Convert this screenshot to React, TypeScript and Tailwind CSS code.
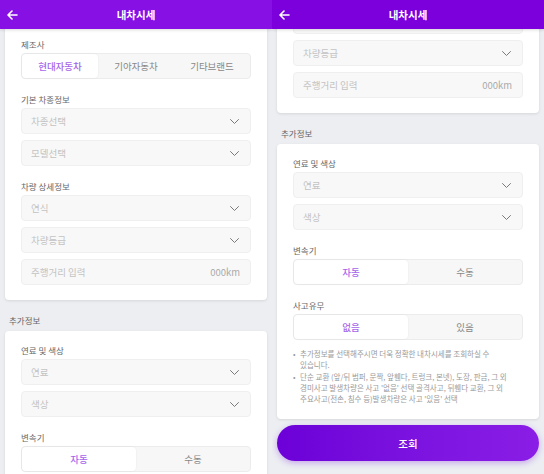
import type { ReactNode } from 'react';

const FONT = { fontFamily: '"Noto Sans CJK KR", "Noto Sans", sans-serif' };

function Chevron() {
  return (
    <svg width="9" height="5" viewBox="0 0 9 5" fill="none" className="shrink-0">
      <path d="M0.5 0.5L4.5 4.5L8.5 0.5" stroke="#7a7a7a" strokeWidth="1" strokeLinecap="round" strokeLinejoin="round" />
    </svg>
  );
}

function BackArrow() {
  return (
    <svg width="11" height="10" viewBox="0 0 11 10" fill="none">
      <path d="M10 5H1.2M5 1L1 5L5 9" stroke="white" strokeWidth="1.6" strokeLinecap="round" strokeLinejoin="round" />
    </svg>
  );
}

function Label({ children, first }: { children: ReactNode; first?: boolean }) {
  return (
    <div className={`${first ? '' : 'mt-[14px]'} mb-[3px] text-[8.5px] leading-[12px] text-[#666]`}>{children}</div>
  );
}

function Select({ placeholder }: { placeholder: string }) {
  return (
    <div className="flex h-[26px] items-center justify-between rounded-[4px] border border-[#efefef] bg-[#f8f8f8] pl-[9px] pr-[11px]">
      <span className="text-[9.5px] text-[#c3c3c3]">{placeholder}</span>
      <Chevron />
    </div>
  );
}

function Segmented({ items }: { items: string[] }) {
  return (
    <div className="flex h-[26px] rounded-[4px] border border-[#ececec] bg-[#f7f7f7]">
      {items.map((item, i) => (
        <div
          key={item}
          className={`flex flex-1 items-center justify-center text-[9.5px] ${
            i === 0
              ? 'rounded-[4px] bg-white font-medium text-[#a566ea] shadow-[0_0_2px_rgba(0,0,0,0.08)]'
              : 'text-[#888]'
          }`}
        >
          {item}
        </div>
      ))}
    </div>
  );
}

function Card({ children }: { children: ReactNode }) {
  return (
    <section className="mx-[5px] rounded-[4px] bg-white px-4 pb-[15px] pt-[13px] shadow-[0_1px_3px_rgba(0,0,0,0.1)]">
      {children}
    </section>
  );
}

function Content() {
  return (
    <div>
      <Card>
        <Label first>제조사</Label>
        <Segmented items={['현대자동차', '기아자동차', '기타브랜드']} />

        <Label>기본 차종정보</Label>
        <div className="flex flex-col gap-[6px]">
          <Select placeholder="차종선택" />
          <Select placeholder="모델선택" />
        </div>

        <Label>차량 상세정보</Label>
        <div className="flex flex-col gap-[6px]">
          <Select placeholder="연식" />
          <Select placeholder="차량등급" />
          <div className="flex h-[26px] items-center justify-between rounded-[4px] border border-[#efefef] bg-[#f8f8f8] pl-[9px] pr-[10px]">
            <span className="text-[9.5px] text-[#c3c3c3]">주행거리 입력</span>
            <span className="text-[9.5px] text-[#aaa]">000km</span>
          </div>
        </div>
      </Card>

      <div className="mb-[5px] mt-[14px] pl-[9px] text-[8.5px] leading-[12px] text-[#666]">추가정보</div>

      <Card>
        <Label first>연료 및 색상</Label>
        <div className="flex flex-col gap-[6px]">
          <Select placeholder="연료" />
          <Select placeholder="색상" />
        </div>

        <Label>변속기</Label>
        <Segmented items={['자동', '수동']} />

        <Label>사고유무</Label>
        <Segmented items={['없음', '있음']} />

        <ul className="mt-[8px] text-[7.5px] leading-[11.3px] text-[#9a9a9a]">
          <li className="flex">
            <span className="w-[7px] shrink-0">•</span>
            <span className="whitespace-nowrap">
              추가정보를 선택해주시면 더욱 정확한 내차시세를 조회하실 수<br />있습니다.
            </span>
          </li>
          <li className="flex">
            <span className="w-[7px] shrink-0">•</span>
            <span className="whitespace-nowrap">
              단순 교환 (앞/뒤 범퍼, 문짝, 앞휀다, 트렁크, 본넷), 도장, 판금, 그 외<br />
              경미사고 발생차량은 사고 '없음' 선택 골격사고, 뒤휀다 교환, 그 외<br />
              주요사고(전손, 침수 등)발생차량은 사고 '있음' 선택
            </span>
          </li>
        </ul>
      </Card>

      <div className="mx-[5px] mt-[6px]">
        <button
          type="button"
          className="flex h-[36px] w-full items-center justify-center rounded-full bg-gradient-to-r from-[#6c00d8] to-[#8a1de6] text-[10.5px] font-medium text-white shadow-[0_2px_6px_rgba(110,0,220,0.3)]"
        >
          조회
        </button>
      </div>
    </div>
  );
}

function Screen({ left }: { left: boolean }) {
  return (
    <div className="flex h-[474px] w-[272px] flex-col overflow-hidden bg-[#eceef2]">
      <header
        className={`relative z-10 flex h-[29px] shrink-0 items-center justify-center shadow-[0_1px_3px_rgba(0,0,0,0.15)] ${
          left ? 'bg-[#8710e4]' : 'bg-[#7b00dc]'
        }`}
      >
        <span className="absolute left-[7px] top-[10px]">
          <BackArrow />
        </span>
        <h1 className="text-[10.5px] font-bold text-white">내차시세</h1>
      </header>
      <div className="min-h-0 flex-1 overflow-hidden">
        <div className={left ? 'mt-[-4px]' : 'mt-[-191px]'}>
          <Content />
        </div>
      </div>
    </div>
  );
}

export default function App() {
  return (
    <div className="flex h-[474px] w-[544px] bg-[#eceef2]" style={FONT}>
      <Screen left />
      <Screen left={false} />
    </div>
  );
}
